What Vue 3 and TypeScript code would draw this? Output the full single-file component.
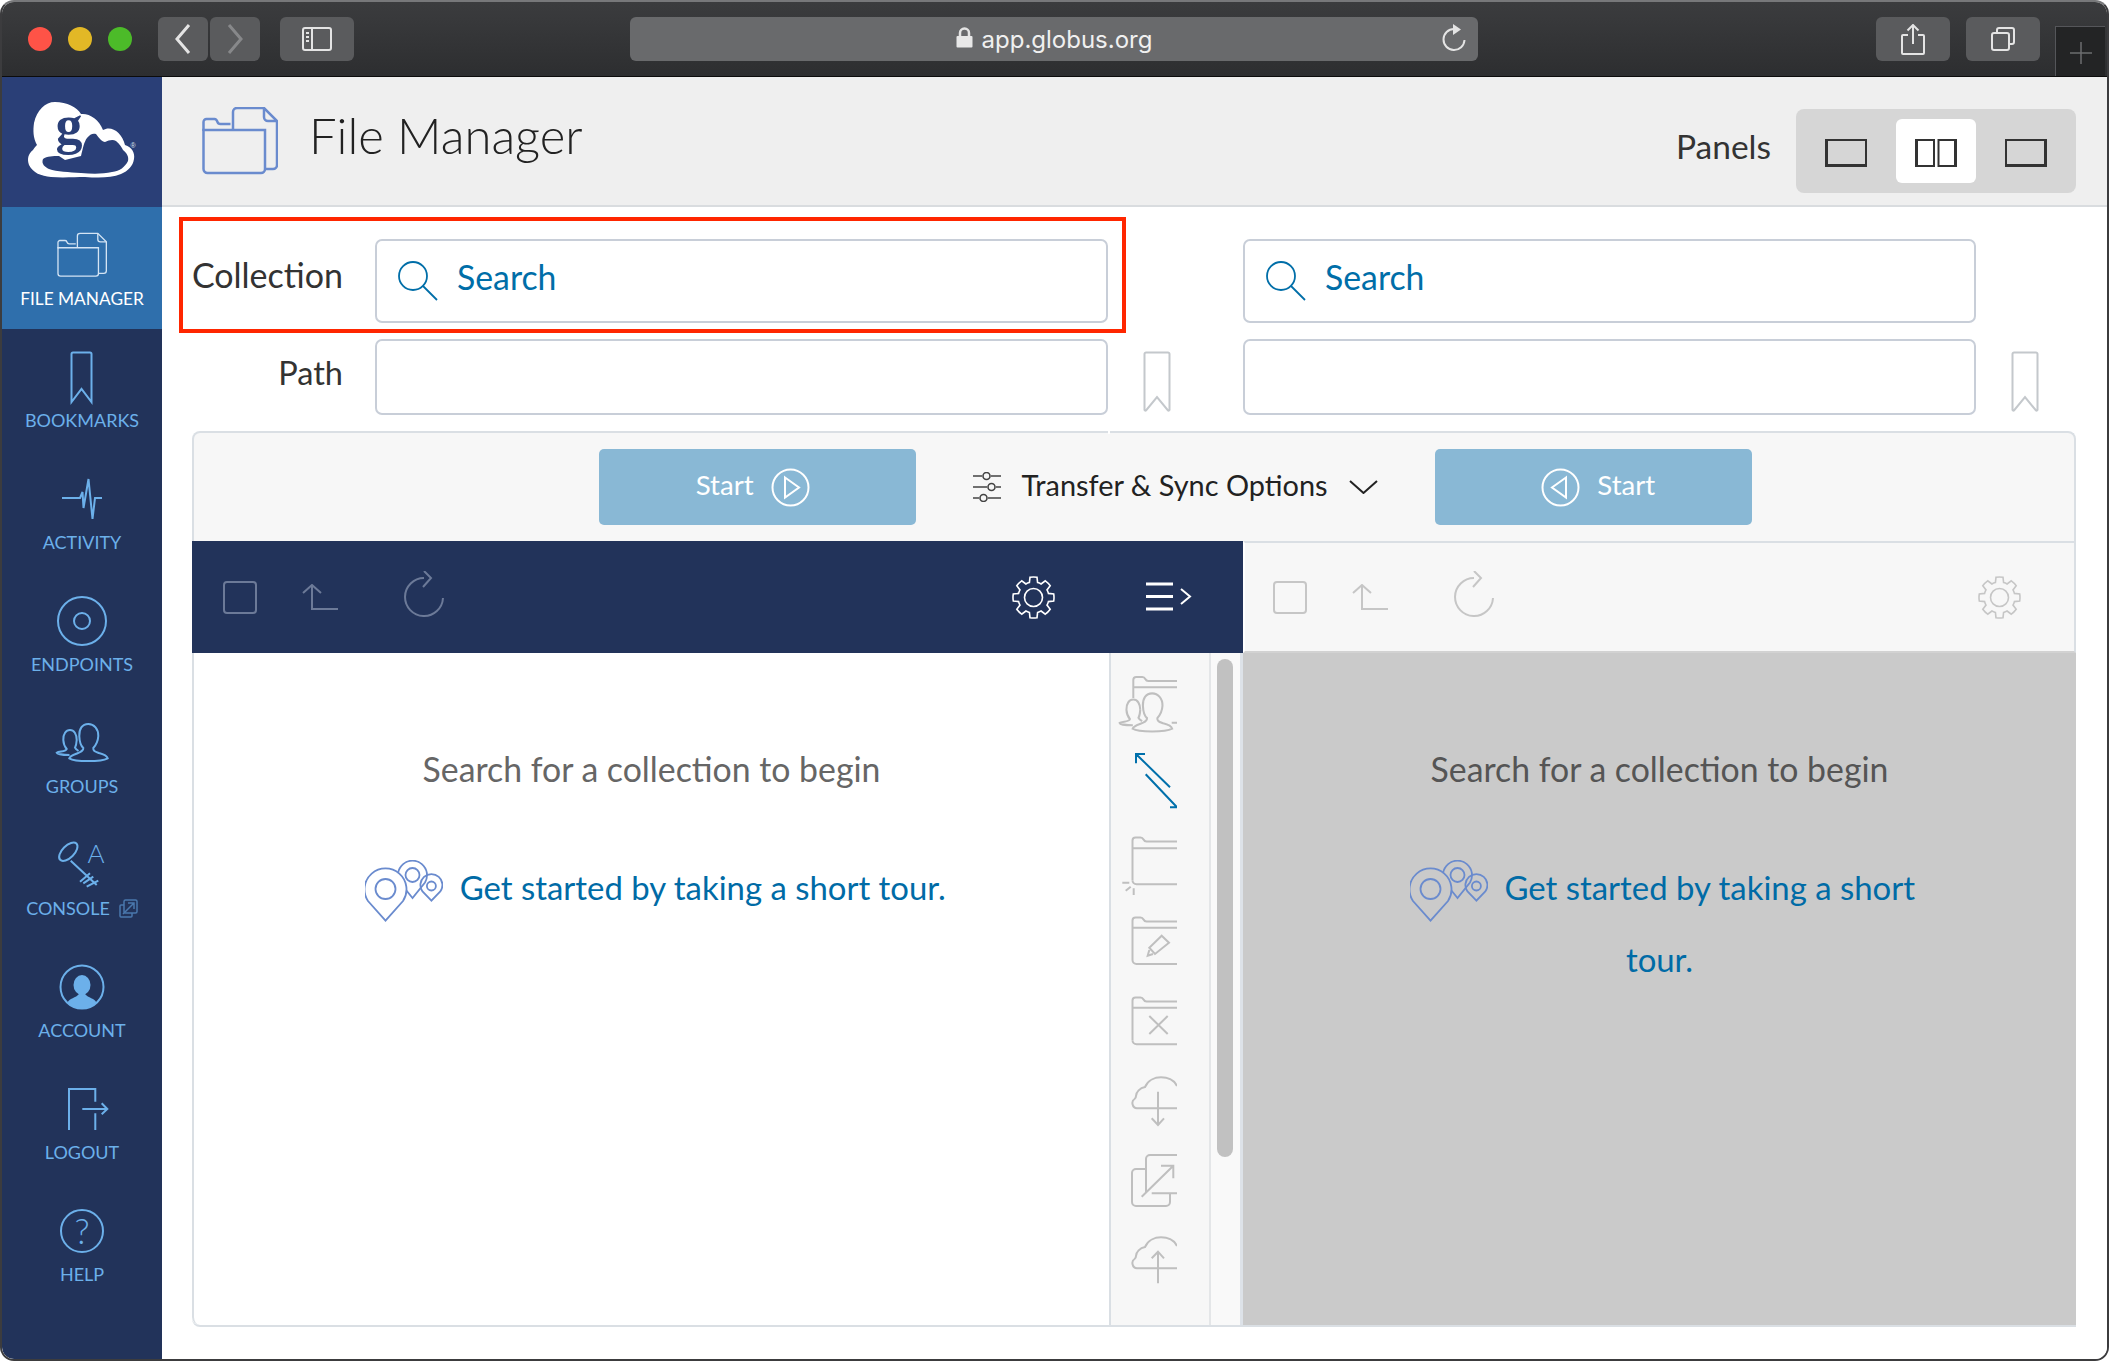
<script setup lang="ts">
const navItems = [
  { label: 'FILE MANAGER', icon: 'i-folder', active: true },
  { label: 'BOOKMARKS', icon: 'i-bookmark-nav' },
  { label: 'ACTIVITY', icon: 'i-activity' },
  { label: 'ENDPOINTS', icon: 'i-endpoints' },
  { label: 'GROUPS', icon: 'i-groups' },
  { label: 'CONSOLE', icon: 'i-console', external: true },
  { label: 'ACCOUNT', icon: 'i-account' },
  { label: 'LOGOUT', icon: 'i-logout' },
  { label: 'HELP', icon: 'i-help' },
]

const sideActions = [
  { icon: 'a-share-folder' },
  { icon: 'a-arrows', active: true },
  { icon: 'a-new-folder' },
  { icon: 'a-rename' },
  { icon: 'a-delete' },
  { icon: 'a-download' },
  { icon: 'a-open' },
  { icon: 'a-upload' },
]

// eight toothed gear, outline only
const gearPath = (() => {
  const cx = 21.5
  const cy = 21.5
  const outer = 20.5
  const inner = 15.5
  const teeth = 8
  const pts: string[] = []
  for (let i = 0; i < teeth; i++) {
    const a = (i * Math.PI * 2) / teeth - Math.PI / 2
    const w = 0.17
    const gap = 0.27
    const p = (r: number, t: number) =>
      `${(cx + r * Math.cos(t)).toFixed(1)} ${(cy + r * Math.sin(t)).toFixed(1)}`
    pts.push(`${i === 0 ? 'M' : 'L'}${p(inner, a - gap)}`)
    pts.push(`L${p(outer, a - w)}`)
    pts.push(`A${outer} ${outer} 0 0 1 ${p(outer, a + w)}`)
    pts.push(`L${p(inner, a + gap)}`)
    const next = a + (Math.PI * 2) / teeth - gap
    pts.push(`A${inner} ${inner} 0 0 1 ${p(inner, next)}`)
  }
  return pts.join(' ') + ' Z'
})()
</script>

<template>
  <svg class="icon-defs" width="0" height="0" aria-hidden="true">
    <defs>
      <g id="people">
        <path d="M46.3 13C40 13 37 18 37.3 25C37.5 31 39 35 41.3 37C41.5 40 39 41 35 42.5C31 44 28 45 27.3 47.3C33 51 59 51 65.7 47.3C65 45 61 43 57 42C53 40.5 51 40 51.3 37C54 34 56 30 56.3 25C56.5 18 52 13 46.3 13Z" />
        <path d="M34.7 29C34.7 23 32 19 28 19C24 19 21 23 21.3 29C21.5 33 23 36 24.7 38C24 41 17 40 14.7 41.7C15 43 21 44 27.5 44M34.7 29C34.5 32 34 35 33 36.7C33.5 38 35 39 36.5 40" />
      </g>
      <symbol id="i-folder" viewBox="0 0 76 68">
        <path d="M1.5 24V15a3 3 0 0 1 3-3h8q2 0 3 3q.5 2 3 2h10" />
        <path d="M1.5 23H63V62a4 4 0 0 1-4 4H5.5a4 4 0 0 1-4-4Z" />
        <path d="M31 23V5a4 4 0 0 1 4-4H62L75 14V58a4 4 0 0 1-4 4H63" />
        <path d="M62 1V10a4 4 0 0 0 4 4H75" />
      </symbol>
      <symbol id="i-bookmark" viewBox="0 0 28 61">
        <path d="M1.5 59V3a1.5 1.5 0 0 1 1.5-1.5H25a1.5 1.5 0 0 1 1.5 1.5V59a1 1 0 0 1-1.5.5L14 46L3 59.5a1 1 0 0 1-1.5-.5Z" />
      </symbol>
      <symbol id="i-bookmark-nav" viewBox="0 0 80 64">
        <path d="M29.5 57V9a1.5 1.5 0 0 1 1.5-1.5H48a1.5 1.5 0 0 1 1.5 1.5V57L39.5 44Z" />
      </symbol>
      <symbol id="i-activity" viewBox="0 0 80 64">
        <path d="M20 31H38L40.5 25L41.5 41L46.5 12L50.5 52L53 31H60" />
      </symbol>
      <symbol id="i-endpoints" viewBox="0 0 80 64">
        <circle cx="40" cy="32" r="24" />
        <circle cx="40" cy="32" r="8" />
      </symbol>
      <symbol id="i-groups" viewBox="0 0 80 64">
        <use href="#people" />
      </symbol>
      <symbol id="i-console" viewBox="0 0 80 64">
        <ellipse cx="26.3" cy="18.7" rx="11.5" ry="6" transform="rotate(-45 26.3 18.7)" />
        <path d="M28.7 27.7L54.7 52M38 48.7L48 40.3M41.3 50.3L51.3 43.7M44.7 53.7L56.3 47.7" />
        <text class="glyph" x="54" y="29.5" font-size="26" text-anchor="middle">A</text>
      </symbol>
      <symbol id="i-account" viewBox="0 0 80 64">
        <circle cx="40" cy="32" r="21.5" />
        <ellipse class="solid" cx="40" cy="30" rx="8.5" ry="10" />
        <path class="solid" d="M25.5 48C27 43 34 43 37 39h6C46 43 53 43 54.5 48A21 21 0 0 1 25.5 48Z" />
      </symbol>
      <symbol id="i-logout" viewBox="0 0 80 64">
        <path d="M27 53V12H53.3V24.7M53.3 36.3V53M40.3 32H65.3M59.7 26.3L65.3 32L59.7 37.3" />
      </symbol>
      <symbol id="i-help" viewBox="0 0 80 64">
        <circle cx="40" cy="32" r="21" />
        <text class="glyph" x="40" y="45" font-size="35" text-anchor="middle">?</text>
      </symbol>

      <symbol id="a-share-folder" viewBox="0 0 66 80">
        <path d="M22.3 33V15a3 3 0 0 1 3-3h6q2 0 3 2q1 2 3 2H66M22.3 22.3H66M60.7 57.7H66" />
        <use href="#people" transform="translate(-6.5 15) scale(1.03)" />
      </symbol>
      <symbol id="a-arrows" viewBox="0 0 66 80">
        <path d="M25 9L59 42.3M34 9H25V18.3M34.7 29.3L66 62.3H59" />
      </symbol>
      <symbol id="a-new-folder" viewBox="0 0 66 80">
        <path d="M21.5 55V15.5a3 3 0 0 1 3-3h5q2 0 3 2q1 2 3 2H66M21.5 23.3H66M66 59.3H25.5a4 4 0 0 1-4-4" />
        <path d="M11.3 57.7H18.3M14.7 65.7L19.7 61.7M22.7 63.3V70" />
      </symbol>
      <symbol id="a-rename" viewBox="0 0 66 80">
        <path d="M21.5 55V15.5a3 3 0 0 1 3-3h5q2 0 3 2q1 2 3 2H66M21.5 22.7H66M66 59H25.5a4 4 0 0 1-4-4" />
        <path d="M50.7 30.7L58 37.7L44 49L38.3 42.7ZM38.3 45L36.7 50.7L42 49" />
      </symbol>
      <symbol id="a-delete" viewBox="0 0 66 80">
        <path d="M21.5 55V15.5a3 3 0 0 1 3-3h5q2 0 3 2q1 2 3 2H66M21.5 22.7H66M66 59.3H25.5a4 4 0 0 1-4-4" />
        <path d="M38.3 31L56.7 49M56.7 31L38.3 49" />
      </symbol>
      <symbol id="a-download" viewBox="0 0 66 80">
        <path d="M66 43.3H26C21 43 20 36 23.5 34C25 33 25 32 25 31C25 27 29 23 34 22C37 15 44 12.3 50 12.3C57 12.3 63 15 66 21" />
        <path d="M47 26.7V60M40.7 53.3L47 60L53 53.3" />
      </symbol>
      <symbol id="a-open" viewBox="0 0 66 80">
        <path d="M35 24H25a4 4 0 0 0-4 4V57a4 4 0 0 0 4 4H55a4 4 0 0 0 4-4V48.3" />
        <path d="M35 48V14a4 4 0 0 1 4-4H66M40.7 48.3H66" />
        <path d="M30.7 51.7L62.3 20.7M50 20.7H62.3V33.3" />
      </symbol>
      <symbol id="a-upload" viewBox="0 0 66 80">
        <path d="M66 43.3H26C21 43 20 36 23.5 34C25 33 25 32 25 31C25 27 29 23 34 22C37 15 44 12.3 50 12.3C57 12.3 63 15 66 21" />
        <path d="M47 26.7V58.3M40.7 33.3L47 26.7L53 33.3" />
      </symbol>

      <symbol id="t-check" viewBox="0 0 34 33">
        <rect x="1" y="1" width="32" height="31" rx="3" />
      </symbol>
      <symbol id="t-up" viewBox="0 0 36 26">
        <path d="M10 1V25H36M1 9L10 1L19 9" />
      </symbol>
      <symbol id="t-refresh" viewBox="0 0 40 46">
        <path d="M20 7A19 19 0 1 0 39 27M20 0L27 7L19 16" />
      </symbol>
      <symbol id="t-gear" viewBox="0 0 43 43">
        <path :d="gearPath" />
        <circle cx="21.5" cy="21.5" r="9" />
      </symbol>
      <symbol id="t-pins" viewBox="0 0 78 62">
        <path d="M47.5 38L35 22.5A14.5 14.5 0 1 1 60 22.5Z" />
        <circle cx="47.5" cy="15" r="7" />
        <path d="M66.4 40.7L57.5 31.5A11 11 0 1 1 75.3 31.5Z" />
        <circle cx="66.4" cy="26" r="4.5" />
        <path class="pin-main" d="M20.5 60.7L3 41A21 21 0 1 1 38 41Z" />
        <circle cx="20.5" cy="29" r="10" />
      </symbol>
    </defs>
  </svg>

  <div class="window">
    <header class="browser-bar">
      <span class="light red"></span>
      <span class="light yellow"></span>
      <span class="light green"></span>
      <button class="chrome-btn nav-btn back">
        <svg width="16" height="32" viewBox="0 0 16 32"><path d="M14 2L2 16L14 30" /></svg>
      </button>
      <button class="chrome-btn nav-btn forward">
        <svg width="16" height="32" viewBox="0 0 16 32"><path d="M2 2L14 16L2 30" /></svg>
      </button>
      <button class="chrome-btn sidebar-btn">
        <svg width="30" height="24" viewBox="0 0 30 24">
          <rect x="1" y="1" width="28" height="22" rx="2" />
          <path d="M10 1V23M4 6H7M4 10H7M4 14H7" />
        </svg>
      </button>
      <div class="address">
        <svg class="lock" width="17" height="21" viewBox="0 0 17 21">
          <path class="lock-arc" d="M4 10V6a4.5 4.5 0 0 1 9 0V10" />
          <rect x="0.5" y="9" width="16" height="11.5" rx="1" />
        </svg>
        <span>app.globus.org</span>
        <svg class="reload" width="26" height="28" viewBox="0 0 26 28">
          <path d="M13 5A10.5 10.5 0 1 0 23.5 16" />
          <path class="reload-head" d="M12 0L20 5.5L12 11Z" />
        </svg>
      </div>
      <button class="chrome-btn share-btn">
        <svg width="24" height="31" viewBox="0 0 24 31">
          <path d="M7 11H2a1 1 0 0 0-1 1V29a1 1 0 0 0 1 1H22a1 1 0 0 0 1-1V12a1 1 0 0 0-1-1H17M12 20V1M6.5 6.5L12 1L17.5 6.5" />
        </svg>
      </button>
      <button class="chrome-btn tabs-btn">
        <svg width="24" height="24" viewBox="0 0 24 24">
          <rect x="1" y="6" width="17" height="17" rx="2" />
          <path d="M6 6V3a2 2 0 0 1 2-2H21a2 2 0 0 1 2 2V15a2 2 0 0 1-2 2H18" />
        </svg>
      </button>
      <div class="new-tab">
        <svg width="22" height="22" viewBox="0 0 22 22"><path d="M11 0V22M0 11H22" /></svg>
      </div>
    </header>

    <div class="app">
      <nav class="sidebar">
        <div class="logo">
          <svg width="135" height="100" viewBox="0 0 135 100">
            <path class="logo-cloud" d="M40 12C52 12 62 17 66 24C74 23 84 29 88 40C96 35 107 42 110 55C117 57 120 63 119 69C118 76 113 81 106 84C96 88 84 88 70 87C60 87 48 88 36 87C26 86 18 83 14 75C12 69 13 64 18 60C20 57 21 56 22 55C18 48 18 40 19 33C22 20 30 12 40 12Z" />
            <path class="logo-hollow" d="M28 69C32 66 38 66 44 66L50 70L66 66C68 58 69 52 72 48C75 44 78 43 81 44C84 48 87 52 90 52C94 50 98 49 101 51C105 54 107 58 108 60C112 63 114 67 113 71C110 77 105 81 97 82C88 84 78 84 66 83C54 82 42 82 34 79C30 77 26 74 28 69Z" />
            <text class="logo-g" x="54" y="53" font-size="54" text-anchor="middle">g</text>
            <text class="logo-r" x="118" y="58" font-size="7" text-anchor="middle">®</text>
          </svg>
        </div>
        <a v-for="item in navItems" :key="item.label" class="nav-item" :class="{ active: item.active }">
          <svg class="nav-icon" width="80" height="64" viewBox="0 0 80 64">
            <use v-if="item.active" href="#i-folder" x="15" y="9" width="50" height="46" />
            <use v-else :href="`#${item.icon}`" width="80" height="64" />
          </svg>
          <span class="nav-label">
            {{ item.label }}
            <svg v-if="item.external" class="external" width="19" height="19" viewBox="0 0 19 19">
              <path d="M5 6H2a1 1 0 0 0-1 1V17a1 1 0 0 0 1 1H12a1 1 0 0 0 1-1V14" />
              <rect x="5" y="1" width="13" height="13" rx="1.5" />
              <path d="M4 15L15 4M9 4H15V10" />
            </svg>
          </span>
        </a>
      </nav>

      <main class="main">
        <div class="page-head">
          <svg class="head-folder" width="76" height="68"><use href="#i-folder" width="76" height="68" /></svg>
          <h1>File Manager</h1>
          <span class="panels-label">Panels</span>
          <div class="panels">
            <button class="panel-opt">
              <svg width="42" height="28" viewBox="0 0 42 28"><path d="M1.5 1H41V27H1.5Z" /><path class="thick" d="M1.5 0V28M0 26.5H42" /></svg>
            </button>
            <button class="panel-opt on">
              <svg width="42" height="28" viewBox="0 0 42 28"><path d="M1.5 1H19V27H1.5ZM23.5 1H40.5V27H23.5Z" /><path class="thick" d="M1.5 0V28M40.5 0V28" /></svg>
            </button>
            <button class="panel-opt">
              <svg width="42" height="28" viewBox="0 0 42 28"><path d="M1 1H40.5V27H1Z" /><path class="thick" d="M40.5 0V28M0 26.5H42" /></svg>
            </button>
          </div>
        </div>

        <section class="form">
          <div class="red-box"></div>
          <label class="field-label">Collection</label>
          <div class="field search-field">
            <svg width="40" height="40" viewBox="0 0 40 40"><circle cx="15" cy="15" r="14" /><path d="M25 25L39 39" /></svg>
            <span>Search</span>
          </div>
          <div></div>
          <div class="field search-field">
            <svg width="40" height="40" viewBox="0 0 40 40"><circle cx="15" cy="15" r="14" /><path d="M25 25L39 39" /></svg>
            <span>Search</span>
          </div>
          <div></div>

          <label class="field-label path-label">Path</label>
          <div class="field"></div>
          <svg class="bookmark" width="28" height="61"><use href="#i-bookmark" width="28" height="61" /></svg>
          <div class="field"></div>
          <svg class="bookmark" width="28" height="61"><use href="#i-bookmark" width="28" height="61" /></svg>
        </section>

        <section class="transfer-bar">
          <button class="start start-left">
            <span>Start</span>
            <svg width="39" height="39" viewBox="0 0 39 39"><circle cx="19.5" cy="19.5" r="18" /><path d="M14 9.5L28 19.5L14 29.5Z" /></svg>
          </button>
          <div class="options">
            <svg class="sliders" width="28" height="30" viewBox="0 0 28 30">
              <path d="M0 4H9M18 4H28M0 15H14M23 15H28M0 26H6M15 26H28" />
              <circle cx="13.5" cy="4" r="3.5" />
              <circle cx="18.5" cy="15" r="3.5" />
              <circle cx="10.5" cy="26" r="3.5" />
            </svg>
            <span>Transfer &amp; Sync Options</span>
            <svg class="chevron" width="29" height="14" viewBox="0 0 29 14"><path d="M1 1L14.5 13L28 1" /></svg>
          </div>
          <button class="start start-right">
            <svg width="39" height="39" viewBox="0 0 39 39"><circle cx="19.5" cy="19.5" r="18" /><path d="M25 9.5L11 19.5L25 29.5Z" /></svg>
            <span>Start</span>
          </button>
        </section>

        <section class="panes">
          <div class="toolbar toolbar-on">
            <svg class="dim check" width="34" height="33"><use href="#t-check" width="34" height="33" /></svg>
            <svg class="dim up" width="36" height="26"><use href="#t-up" width="36" height="26" /></svg>
            <svg class="dim refresh" width="40" height="46"><use href="#t-refresh" width="40" height="46" /></svg>
            <svg class="gear" width="43" height="43"><use href="#t-gear" width="43" height="43" /></svg>
            <svg class="menu" width="46" height="30" viewBox="0 0 46 30">
              <path class="menu-lines" d="M0 2H27M0 14.5H27M0 27H27" />
              <path d="M35 7L44 14.5L35 22" />
            </svg>
          </div>
          <div class="toolbar toolbar-off">
            <svg class="dim check" width="34" height="33"><use href="#t-check" width="34" height="33" /></svg>
            <svg class="dim up" width="36" height="26"><use href="#t-up" width="36" height="26" /></svg>
            <svg class="dim refresh" width="40" height="46"><use href="#t-refresh" width="40" height="46" /></svg>
            <svg class="gear" width="43" height="43"><use href="#t-gear" width="43" height="43" /></svg>
          </div>

          <div class="pane-left">
            <div class="pane-content">
              <p class="hint">Search for a collection to begin</p>
              <a class="tour">
                <svg width="78" height="62"><use href="#t-pins" width="78" height="62" /></svg>
                Get started by taking a short tour.
              </a>
            </div>
            <div class="side-actions">
              <svg v-for="a in sideActions" :key="a.icon" :class="{ current: a.active }" width="66" height="80">
                <use :href="`#${a.icon}`" width="66" height="80" />
              </svg>
            </div>
            <div class="scroll-col"><div class="thumb"></div></div>
          </div>
          <div class="pane-right">
            <p class="hint">Search for a collection to begin</p>
            <a class="tour">
              <svg width="78" height="62"><use href="#t-pins" width="78" height="62" /></svg>
              Get started by taking a short tour.
            </a>
          </div>
        </section>
      </main>
    </div>
  </div>
</template>

<style>
html,
body {
  background: #fff;
}
</style>

<style scoped>
* {
  box-sizing: border-box;
}

button {
  border: none;
  padding: 0;
  font: inherit;
}

p,
h1 {
  margin: 0;
}

svg {
  display: block;
  fill: none;
  flex: none;
}

.icon-defs {
  position: absolute;
}

.glyph {
  font-family: Lato, sans-serif;
  font-weight: 300;
  fill: currentColor;
  stroke: none;
}

.solid {
  fill: currentColor;
  stroke: none;
}

.window {
  width: 2109px;
  height: 1361px;
  display: flex;
  flex-direction: column;
  overflow: hidden;
  border: 2px solid #3c3c3e;
  border-top-color: #77787a;
  border-radius: 14px;
  font-family: Lato, "Open Sans", sans-serif;
  font-weight: 300;
  color: #222;
}

/* safari chrome */
.browser-bar {
  height: 75px;
  flex: none;
  display: flex;
  align-items: flex-start;
  padding-top: 15px;
  background: linear-gradient(#3b3c3e, #2d2e30);
  border-bottom: 1px solid #0c0c0c;
}

.light {
  width: 24px;
  height: 24px;
  border-radius: 50%;
  margin-top: 10px;
  margin-right: 16px;
}

.red {
  background: #fe5347;
  margin-left: 26px;
}

.yellow {
  background: #e2b826;
}

.green {
  background: #4cbb29;
  margin-right: 0;
}

.chrome-btn {
  height: 44px;
  background: #5a5b5d;
  border-radius: 6px;
  display: flex;
  align-items: center;
  justify-content: center;
}

.chrome-btn svg,
.address svg {
  stroke: #e4e4e4;
  stroke-width: 2;
}

.nav-btn {
  width: 50px;
}

.nav-btn svg {
  stroke-width: 3;
}

.back {
  margin-left: 26px;
}

.forward {
  margin-left: 2px;
}

.forward svg {
  stroke: #87888a;
}

.sidebar-btn {
  width: 74px;
  margin-left: 20px;
}

.address {
  width: 848px;
  height: 44px;
  margin-left: 276px;
  background: #696a6c;
  border-radius: 6px;
  display: flex;
  align-items: center;
  justify-content: center;
  gap: 9px;
  position: relative;
  font-family: Inter, "Liberation Sans", sans-serif;
  font-weight: 400;
  font-size: 24px;
  color: #f0f0f0;
}

.lock {
  margin-top: -3px;
}

.address .lock rect {
  fill: #e8e8e8;
  stroke: none;
}

.address .lock-arc {
  stroke-width: 2.5;
}

.reload {
  position: absolute;
  right: 11px;
  top: 7px;
}

.reload-head {
  fill: #e4e4e4;
  stroke: none;
}

.share-btn {
  width: 74px;
  margin-left: 398px;
}

.tabs-btn {
  width: 74px;
  margin-left: 16px;
}

.new-tab {
  width: 50px;
  height: 50px;
  margin-left: 15px;
  margin-top: 9px;
  background: #232425;
  border: solid #55565a;
  border-width: 1px 0 0 1px;
  display: flex;
  align-items: center;
  justify-content: center;
  padding-top: 2px;
}

.new-tab svg {
  stroke: #6c6d6f;
  stroke-width: 1.5;
}

.app {
  flex: 1;
  min-height: 0;
  display: flex;
}

/* globus nav */
.sidebar {
  width: 160px;
  flex: none;
  display: flex;
  flex-direction: column;
  background: #22335a;
  border-bottom-left-radius: 12px;
  color: #6cb0ea;
}

.logo {
  height: 130px;
  flex: none;
  background: #2a3f77;
  padding: 13px 0 0 13px;
}

.logo-cloud {
  fill: #fff;
}

.logo-hollow {
  fill: #2a3f77;
}

.logo-g {
  font-family: "Liberation Serif", serif;
  font-weight: 700;
  fill: #2a3f77;
}

.logo-r {
  font-family: "Liberation Sans", sans-serif;
  fill: #dfe5f2;
}

.nav-item {
  height: 122px;
  flex: none;
  padding-top: 16px;
  text-align: center;
}

.nav-item.active {
  background: #2f6fac;
  color: #fff;
}

.nav-icon {
  margin: 0 auto 0 40px;
  stroke: currentColor;
  stroke-width: 2;
}

.nav-item.active .nav-icon {
  margin-bottom: 1px;
  stroke: #d4e4f4;
}

.nav-label {
  display: flex;
  justify-content: center;
  align-items: center;
  gap: 9px;
  height: 22px;
  font-size: 18px;
  font-weight: 400;
  line-height: 22px;
  white-space: nowrap;
}

.nav-item.active .nav-label {
  font-size: 17.3px;
}

.external {
  stroke: #4a78ad;
  stroke-width: 1.5;
}

.main {
  flex: 1;
  min-width: 0;
  background: #fff;
}

.page-head {
  height: 130px;
  display: flex;
  align-items: flex-start;
  background: #efefef;
  border-bottom: 2px solid #d9dcdf;
}

.head-folder {
  margin: 30px 0 0 40px;
  stroke: #6a8bce;
  stroke-width: 2.5;
}

h1 {
  margin: 30px 0 0 31px;
  font-size: 49px;
  line-height: 56px;
  font-weight: 300;
  color: #222;
}

.panels-label {
  margin: 49px 25px 0 auto;
  font-size: 33.5px;
  line-height: 40px;
  font-weight: 400;
  color: #333;
}

.panels {
  width: 280px;
  height: 84px;
  margin: 32px 31px 0 0;
  padding: 10px 10px;
  display: flex;
  justify-content: space-between;
  background: #d6d6d6;
  border-radius: 8px;
}

.panel-opt {
  width: 80px;
  height: 64px;
  background: none;
  border-radius: 6px;
  display: flex;
  align-items: center;
  justify-content: center;
  padding-top: 4px;
}

.panel-opt.on {
  background: #fff;
}

.panel-opt svg {
  stroke: #333;
  stroke-width: 2;
}

.panel-opt .thick {
  stroke-width: 3;
}

/* collection and path */
.form {
  position: relative;
  display: grid;
  grid-template-columns: 213px 733px 135px 733px 1fr;
  grid-template-rows: 84px 76px;
  row-gap: 16px;
  margin-top: 32px;
}

.red-box {
  position: absolute;
  left: 17px;
  top: -22px;
  width: 947px;
  height: 116px;
  border: 4px solid #ff2600;
  pointer-events: none;
}

.field-label {
  padding: 14px 32px 0 0;
  text-align: right;
  font-size: 34px;
  line-height: 44px;
  font-weight: 400;
  color: #333;
}

.path-label {
  padding-top: 12px;
  font-size: 32.5px;
}

.field {
  display: flex;
  align-items: center;
  background: #fff;
  border: 2px solid #c8ced8;
  border-radius: 7px;
}

.search-field {
  padding-left: 21px;
  font-size: 33.8px;
  font-weight: 400;
  color: #006ea8;
}

.search-field span {
  padding-bottom: 8px;
}

.search-field svg {
  stroke: #006ea8;
  stroke-width: 1.8;
  margin-right: 19px;
}

.bookmark {
  margin: 12px 0 0 35px;
  stroke: #c4c8cc;
  stroke-width: 2;
}

/* start buttons */
.transfer-bar {
  position: relative;
  height: 110px;
  margin: 16px 31px 0 30px;
  padding-left: 83px;
  display: flex;
  align-items: center;
  justify-content: center;
  gap: 57px;
  background: #f7f7f7;
  border: 2px solid #dadfe4;
  border-bottom: none;
  border-radius: 8px 8px 0 0;
}

.transfer-bar::before {
  content: "";
  position: absolute;
  left: 914px;
  top: -2px;
  width: 2px;
  height: 3px;
  background: #fff;
}

.start {
  width: 317.5px;
  height: 76px;
  display: flex;
  align-items: center;
  justify-content: center;
  gap: 17px;
  background: #89b8d5;
  border-radius: 5px;
  color: #fff;
  font-size: 27.6px;
  font-weight: 400;
}

.start-left {
  padding-right: 10px;
}

.start-right {
  padding-left: 10px;
}

.start span,
.options span {
  padding-bottom: 5px;
}

.start svg {
  stroke: #fff;
  stroke-width: 2;
}

.options {
  display: flex;
  align-items: center;
  font-size: 28.9px;
  font-weight: 400;
  color: #222;
}

.sliders {
  margin-right: 20px;
  stroke: #444;
  stroke-width: 1.6;
}

.chevron {
  margin-left: 21px;
  stroke: #222;
  stroke-width: 2;
}

/* panes */
.panes {
  display: grid;
  grid-template-columns: 1051px 1fr;
  margin: 0 31px 0 30px;
}

.toolbar {
  display: flex;
  align-items: center;
  height: 112px;
}

.toolbar .gear {
  margin-left: auto;
  stroke-width: 1.6;
}

.toolbar .up {
  margin-left: 45px;
}

.toolbar .refresh {
  margin-left: 66px;
  margin-top: -6px;
}

.dim {
  stroke-width: 2;
}

.toolbar-on {
  padding: 0 51px 0 31px;
  background: #22335a;
}

.toolbar-on .dim {
  stroke: #6c7a98;
}

.toolbar-on .gear {
  stroke: #fff;
}

.menu {
  margin-left: 91px;
  stroke: #fff;
  stroke-width: 2;
}

.menu-lines {
  stroke-width: 3;
}

.toolbar-off {
  padding: 0 53px 0 28px;
  background: #f7f7f7;
  border-top: 2px solid #dadfe4;
  border-left: 2px solid #fff;
  border-right: 2px solid #dadfe4;
  border-bottom: 2px solid #d2d2d2;
}

.toolbar-off .dim,
.toolbar-off .gear {
  stroke: #c6c6c6;
}

.pane-left {
  height: 674px;
  display: grid;
  grid-template-columns: 917px 102px 32px;
  border-bottom: 2px solid #dadfe4;
  border-bottom-left-radius: 8px;
  --pin-bg: #fff;
}

.pane-content {
  border-left: 2px solid #dadfe4;
  border-bottom-left-radius: 8px;
  text-align: center;
}

.hint {
  padding-top: 80px;
  font-size: 33.8px;
  line-height: 72px;
  font-weight: 400;
  color: #666;
}

.tour {
  display: block;
  margin: 47px auto 0;
  font-size: 32.9px;
  font-weight: 400;
  line-height: 72px;
  color: #006ba6;
}

.pane-content .tour {
  padding-left: 8px;
}

.tour svg {
  display: inline-block;
  vertical-align: -22px;
  margin-right: 8px;
  stroke: #6a8bce;
  stroke-width: 1.8;
}

.pane-right .tour svg {
  margin-left: 6px;
}

.pin-main {
  fill: var(--pin-bg);
}

.side-actions {
  padding-top: 12px;
  background: #f7f7f7;
  border-left: 2px solid #dadfe4;
  border-right: 2px solid #e4e6e8;
  stroke: #bfbfbf;
  stroke-width: 2;
}

.side-actions .current {
  stroke: #0070ab;
}

.scroll-col {
  background: #f9f9f9;
  padding: 6px 9px 0 6px;
  border-right: 3px solid #dde2e8;
}

.thumb {
  width: 16px;
  height: 498px;
  border-radius: 8px;
  background: #c1c1c1;
}

.pane-right {
  height: 674px;
  background: #cacaca;
  border-bottom: 2px solid #dadfe4;
  text-align: center;
  --pin-bg: #cacaca;
}

.pane-right .hint {
  color: #555;
}

.pane-right .tour {
  width: 530px;
}
</style>
